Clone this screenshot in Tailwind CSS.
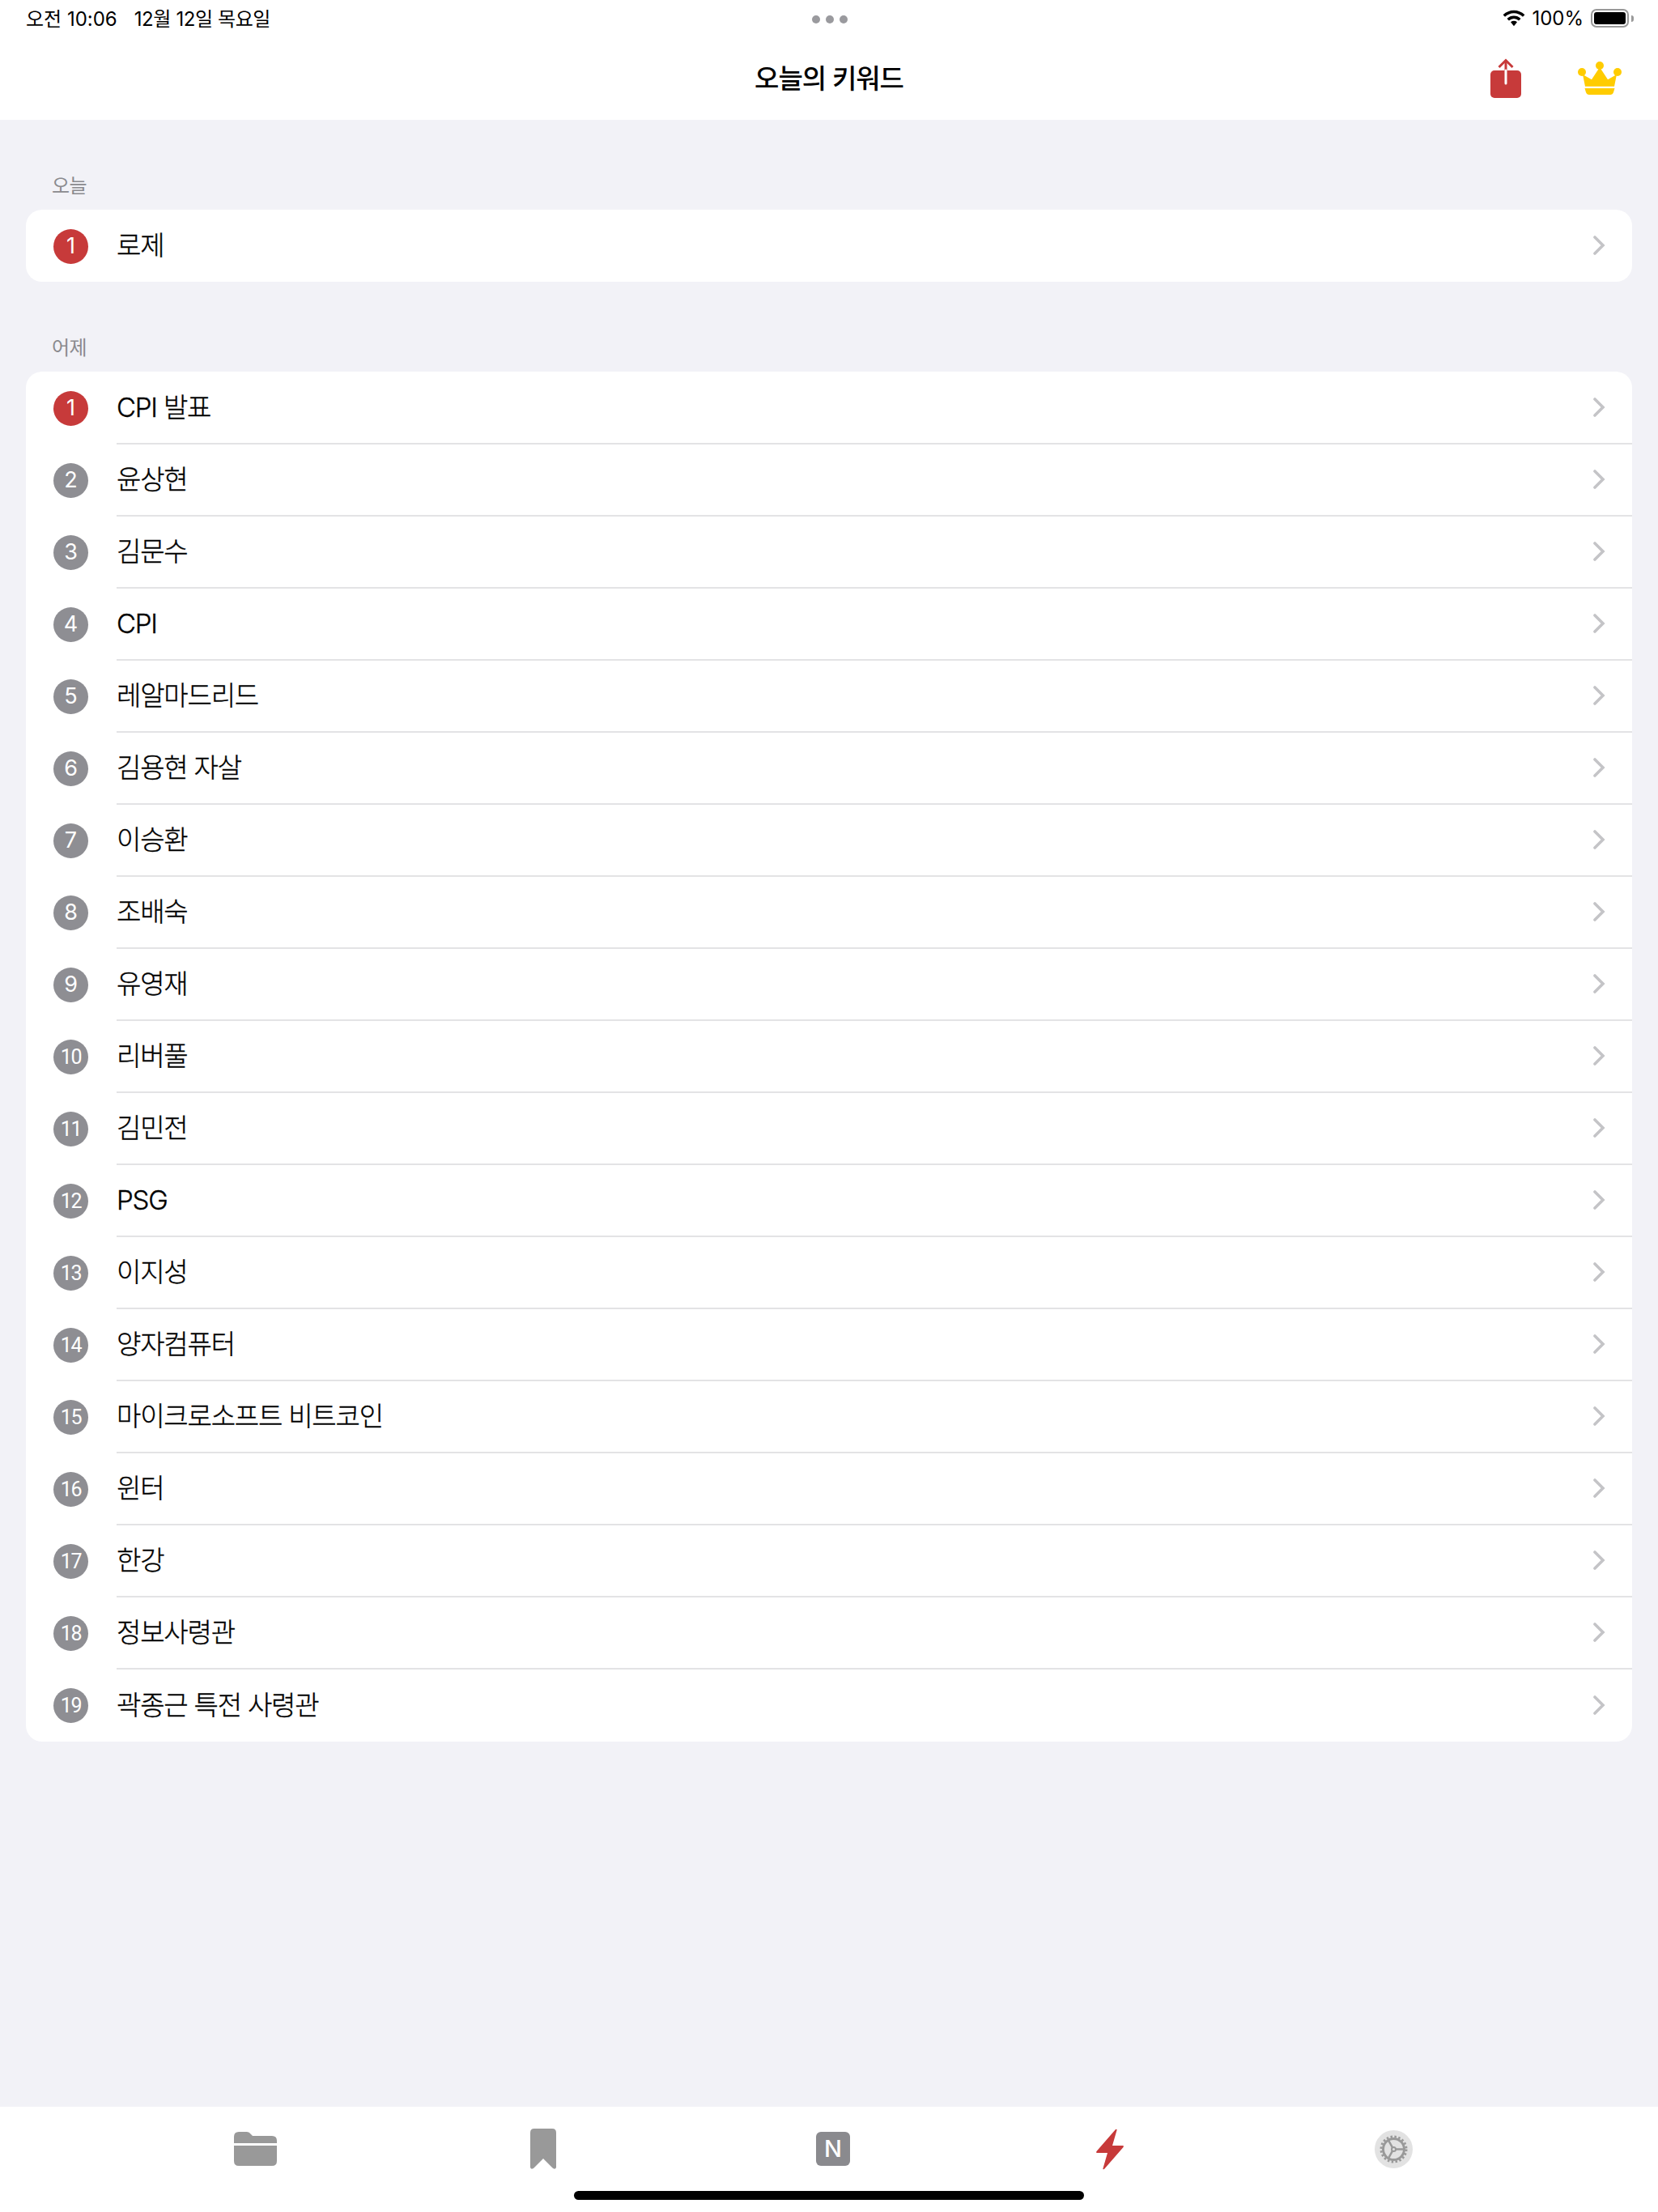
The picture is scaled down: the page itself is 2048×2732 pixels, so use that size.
<!doctype html>
<html lang="ko"><head><meta charset="utf-8"><script src="https://cdn.jsdelivr.net/npm/@tailwindcss/browser@4"></script></head>
<body class="m-0">
<div class="w-[2048px] h-[2732px] flex flex-col bg-[#f2f2f7] overflow-hidden font-['Inter','Noto_Sans_CJK_KR',sans-serif] text-black">
  <header class="bg-white h-[148px] shrink-0 relative flex flex-col">
    <div class="h-[47px] flex items-center pl-[32px] pr-[30px] text-[24px] relative">
      <span class="tracking-[0px]">오전 10:06</span><span class="ml-[21px] tracking-[-0.4px]">12월 12일 목요일</span>
      <div class="absolute left-[1003px] top-[19px] flex gap-[7px]"><i class="w-[10px] h-[10px] rounded-full bg-[#9a9a9e]"></i><i class="w-[10px] h-[10px] rounded-full bg-[#9a9a9e]"></i><i class="w-[10px] h-[10px] rounded-full bg-[#9a9a9e]"></i></div>
      <div class="ml-auto flex items-center -translate-y-px">
        <svg width="28" height="21" viewBox="0 0 28 21" fill="none" stroke="#000" stroke-width="3.600"><path d="M1.800 7.500C9 .8 19 .8 26.200 7.500"/><path d="M6.700 12.300C11 8.300 17 8.300 21.300 12.300"/><path d="M10 15.200C12.400 13.300 15.600 13.300 18 15.200L14 20.200Z" fill="#000" stroke="none"/></svg>
        <span class="ml-[8px]">100%</span>
        <div class="ml-[9px] w-[47px] h-[23px] rounded-[7px] border-[2px] border-[#999] p-[2px]"><div class="w-full h-full rounded-[3px] bg-black"></div></div>
        <div class="w-[3px] h-[8px] rounded-r-[3px] bg-[#999] ml-[3px]"></div>
      </div>
    </div>
    <div class="h-[101px] flex items-center justify-center"><h1 class="text-[33px] font-medium leading-none tracking-[-1px] m-0">오늘의 키워드</h1></div>
    <svg class="absolute left-[1841px] top-[72px]" width="38" height="50" viewBox="0 0 38 50"><rect y="15" width="38" height="34" rx="5" fill="#c73a3a"/><path d="M19 3V16" stroke="#c73a3a" stroke-width="3"/><path d="M10.500 11 19 2.500 27.500 11" fill="none" stroke="#c73a3a" stroke-width="3"/><path d="M19 15V31" stroke="#fff" stroke-width="3" stroke-linecap="round"/></svg>
    <svg class="absolute left-[1949px] top-[76px]" width="54" height="41" viewBox="0 0 54 41" fill="#ffcc00"><circle cx="5" cy="13" r="5"/><circle cx="27" cy="5" r="5"/><circle cx="49" cy="13" r="5"/><path d="M6 16 17 22.300 27 7 37 22.300 48 16 45 30.700H9z"/><path d="M8.500 33H45.500l-1.500 5q-1 3-4 3H14q-3 0-4-3z"/></svg>
  </header>

  <main class="flex-1 px-[32px]">
    <h2 class="m-0 h-[111px] pl-[32px] pt-[64px] text-[24px] leading-[36px] font-normal text-[#8a8a8e] tracking-[-0.5px]">오늘</h2>
    <section class="bg-white rounded-[20px] overflow-hidden pt-[1px]">
      <a class="flex items-center h-[88px] pl-[34px]"><span class="w-[43px] h-[43px] rounded-full bg-[#c73a3a] text-white flex items-center justify-center text-[27px] shrink-0">1</span><div class="ml-[35px] flex-1 h-full flex items-center justify-between pr-[33px]"><span class="text-[33px] font-light tracking-[-1.2px] [-webkit-text-stroke:0.35px_#000]">로제</span><svg class="-translate-y-px" width="16" height="24" viewBox="0 0 16 24"><path d="M3 2l10 10L3 22" fill="none" stroke="#c4c4c7" stroke-width="3.600" stroke-linecap="round"/></svg></div></a>
    </section>
    <h2 class="m-0 h-[111px] pl-[32px] pt-[64px] text-[24px] leading-[36px] font-normal text-[#8a8a8e] tracking-[-0.5px]">어제</h2>
    <section class="bg-white rounded-[20px] overflow-hidden pt-[1px]">
      <a class="flex items-center h-[89px] pl-[34px]"><span class="w-[43px] h-[43px] rounded-full bg-[#c73a3a] text-white flex items-center justify-center text-[27px] shrink-0">1</span><div class="ml-[35px] flex-1 h-full flex items-center justify-between pr-[33px] border-b-[2px] border-[#e3e3e5]"><span class="text-[33px] font-light tracking-[-1.2px] [-webkit-text-stroke:0.35px_#000]">CPI 발표</span><svg class="-translate-y-px" width="16" height="24" viewBox="0 0 16 24"><path d="M3 2l10 10L3 22" fill="none" stroke="#c4c4c7" stroke-width="3.600" stroke-linecap="round"/></svg></div></a>
      <a class="flex items-center h-[89px] pl-[34px]"><span class="w-[43px] h-[43px] rounded-full bg-[#8e8e93] text-white flex items-center justify-center text-[27px] shrink-0">2</span><div class="ml-[35px] flex-1 h-full flex items-center justify-between pr-[33px] border-b-[2px] border-[#e3e3e5]"><span class="text-[33px] font-light tracking-[-1.2px] [-webkit-text-stroke:0.35px_#000]">윤상현</span><svg class="-translate-y-px" width="16" height="24" viewBox="0 0 16 24"><path d="M3 2l10 10L3 22" fill="none" stroke="#c4c4c7" stroke-width="3.600" stroke-linecap="round"/></svg></div></a>
      <a class="flex items-center h-[89px] pl-[34px]"><span class="w-[43px] h-[43px] rounded-full bg-[#8e8e93] text-white flex items-center justify-center text-[27px] shrink-0">3</span><div class="ml-[35px] flex-1 h-full flex items-center justify-between pr-[33px] border-b-[2px] border-[#e3e3e5]"><span class="text-[33px] font-light tracking-[-1.2px] [-webkit-text-stroke:0.35px_#000]">김문수</span><svg class="-translate-y-px" width="16" height="24" viewBox="0 0 16 24"><path d="M3 2l10 10L3 22" fill="none" stroke="#c4c4c7" stroke-width="3.600" stroke-linecap="round"/></svg></div></a>
      <a class="flex items-center h-[89px] pl-[34px]"><span class="w-[43px] h-[43px] rounded-full bg-[#8e8e93] text-white flex items-center justify-center text-[27px] shrink-0">4</span><div class="ml-[35px] flex-1 h-full flex items-center justify-between pr-[33px] border-b-[2px] border-[#e3e3e5]"><span class="text-[33px] font-light tracking-[-1.2px] [-webkit-text-stroke:0.35px_#000]">CPI</span><svg class="-translate-y-px" width="16" height="24" viewBox="0 0 16 24"><path d="M3 2l10 10L3 22" fill="none" stroke="#c4c4c7" stroke-width="3.600" stroke-linecap="round"/></svg></div></a>
      <a class="flex items-center h-[89px] pl-[34px]"><span class="w-[43px] h-[43px] rounded-full bg-[#8e8e93] text-white flex items-center justify-center text-[27px] shrink-0">5</span><div class="ml-[35px] flex-1 h-full flex items-center justify-between pr-[33px] border-b-[2px] border-[#e3e3e5]"><span class="text-[33px] font-light tracking-[-1.2px] [-webkit-text-stroke:0.35px_#000]">레알마드리드</span><svg class="-translate-y-px" width="16" height="24" viewBox="0 0 16 24"><path d="M3 2l10 10L3 22" fill="none" stroke="#c4c4c7" stroke-width="3.600" stroke-linecap="round"/></svg></div></a>
      <a class="flex items-center h-[89px] pl-[34px]"><span class="w-[43px] h-[43px] rounded-full bg-[#8e8e93] text-white flex items-center justify-center text-[27px] shrink-0">6</span><div class="ml-[35px] flex-1 h-full flex items-center justify-between pr-[33px] border-b-[2px] border-[#e3e3e5]"><span class="text-[33px] font-light tracking-[-1.2px] [-webkit-text-stroke:0.35px_#000]">김용현 자살</span><svg class="-translate-y-px" width="16" height="24" viewBox="0 0 16 24"><path d="M3 2l10 10L3 22" fill="none" stroke="#c4c4c7" stroke-width="3.600" stroke-linecap="round"/></svg></div></a>
      <a class="flex items-center h-[89px] pl-[34px]"><span class="w-[43px] h-[43px] rounded-full bg-[#8e8e93] text-white flex items-center justify-center text-[27px] shrink-0">7</span><div class="ml-[35px] flex-1 h-full flex items-center justify-between pr-[33px] border-b-[2px] border-[#e3e3e5]"><span class="text-[33px] font-light tracking-[-1.2px] [-webkit-text-stroke:0.35px_#000]">이승환</span><svg class="-translate-y-px" width="16" height="24" viewBox="0 0 16 24"><path d="M3 2l10 10L3 22" fill="none" stroke="#c4c4c7" stroke-width="3.600" stroke-linecap="round"/></svg></div></a>
      <a class="flex items-center h-[89px] pl-[34px]"><span class="w-[43px] h-[43px] rounded-full bg-[#8e8e93] text-white flex items-center justify-center text-[27px] shrink-0">8</span><div class="ml-[35px] flex-1 h-full flex items-center justify-between pr-[33px] border-b-[2px] border-[#e3e3e5]"><span class="text-[33px] font-light tracking-[-1.2px] [-webkit-text-stroke:0.35px_#000]">조배숙</span><svg class="-translate-y-px" width="16" height="24" viewBox="0 0 16 24"><path d="M3 2l10 10L3 22" fill="none" stroke="#c4c4c7" stroke-width="3.600" stroke-linecap="round"/></svg></div></a>
      <a class="flex items-center h-[89px] pl-[34px]"><span class="w-[43px] h-[43px] rounded-full bg-[#8e8e93] text-white flex items-center justify-center text-[27px] shrink-0">9</span><div class="ml-[35px] flex-1 h-full flex items-center justify-between pr-[33px] border-b-[2px] border-[#e3e3e5]"><span class="text-[33px] font-light tracking-[-1.2px] [-webkit-text-stroke:0.35px_#000]">유영재</span><svg class="-translate-y-px" width="16" height="24" viewBox="0 0 16 24"><path d="M3 2l10 10L3 22" fill="none" stroke="#c4c4c7" stroke-width="3.600" stroke-linecap="round"/></svg></div></a>
      <a class="flex items-center h-[89px] pl-[34px]"><span class="w-[43px] h-[43px] rounded-full bg-[#8e8e93] text-white flex items-center justify-center font-['Roboto',sans-serif] text-[25px] tracking-[-1.2px] shrink-0">10</span><div class="ml-[35px] flex-1 h-full flex items-center justify-between pr-[33px] border-b-[2px] border-[#e3e3e5]"><span class="text-[33px] font-light tracking-[-1.2px] [-webkit-text-stroke:0.35px_#000]">리버풀</span><svg class="-translate-y-px" width="16" height="24" viewBox="0 0 16 24"><path d="M3 2l10 10L3 22" fill="none" stroke="#c4c4c7" stroke-width="3.600" stroke-linecap="round"/></svg></div></a>
      <a class="flex items-center h-[89px] pl-[34px]"><span class="w-[43px] h-[43px] rounded-full bg-[#8e8e93] text-white flex items-center justify-center font-['Roboto',sans-serif] text-[25px] tracking-[-1.2px] shrink-0">11</span><div class="ml-[35px] flex-1 h-full flex items-center justify-between pr-[33px] border-b-[2px] border-[#e3e3e5]"><span class="text-[33px] font-light tracking-[-1.2px] [-webkit-text-stroke:0.35px_#000]">김민전</span><svg class="-translate-y-px" width="16" height="24" viewBox="0 0 16 24"><path d="M3 2l10 10L3 22" fill="none" stroke="#c4c4c7" stroke-width="3.600" stroke-linecap="round"/></svg></div></a>
      <a class="flex items-center h-[89px] pl-[34px]"><span class="w-[43px] h-[43px] rounded-full bg-[#8e8e93] text-white flex items-center justify-center font-['Roboto',sans-serif] text-[25px] tracking-[-1.2px] shrink-0">12</span><div class="ml-[35px] flex-1 h-full flex items-center justify-between pr-[33px] border-b-[2px] border-[#e3e3e5]"><span class="text-[33px] font-light tracking-[-1.2px] [-webkit-text-stroke:0.35px_#000]">PSG</span><svg class="-translate-y-px" width="16" height="24" viewBox="0 0 16 24"><path d="M3 2l10 10L3 22" fill="none" stroke="#c4c4c7" stroke-width="3.600" stroke-linecap="round"/></svg></div></a>
      <a class="flex items-center h-[89px] pl-[34px]"><span class="w-[43px] h-[43px] rounded-full bg-[#8e8e93] text-white flex items-center justify-center font-['Roboto',sans-serif] text-[25px] tracking-[-1.2px] shrink-0">13</span><div class="ml-[35px] flex-1 h-full flex items-center justify-between pr-[33px] border-b-[2px] border-[#e3e3e5]"><span class="text-[33px] font-light tracking-[-1.2px] [-webkit-text-stroke:0.35px_#000]">이지성</span><svg class="-translate-y-px" width="16" height="24" viewBox="0 0 16 24"><path d="M3 2l10 10L3 22" fill="none" stroke="#c4c4c7" stroke-width="3.600" stroke-linecap="round"/></svg></div></a>
      <a class="flex items-center h-[89px] pl-[34px]"><span class="w-[43px] h-[43px] rounded-full bg-[#8e8e93] text-white flex items-center justify-center font-['Roboto',sans-serif] text-[25px] tracking-[-1.2px] shrink-0">14</span><div class="ml-[35px] flex-1 h-full flex items-center justify-between pr-[33px] border-b-[2px] border-[#e3e3e5]"><span class="text-[33px] font-light tracking-[-1.2px] [-webkit-text-stroke:0.35px_#000]">양자컴퓨터</span><svg class="-translate-y-px" width="16" height="24" viewBox="0 0 16 24"><path d="M3 2l10 10L3 22" fill="none" stroke="#c4c4c7" stroke-width="3.600" stroke-linecap="round"/></svg></div></a>
      <a class="flex items-center h-[89px] pl-[34px]"><span class="w-[43px] h-[43px] rounded-full bg-[#8e8e93] text-white flex items-center justify-center font-['Roboto',sans-serif] text-[25px] tracking-[-1.2px] shrink-0">15</span><div class="ml-[35px] flex-1 h-full flex items-center justify-between pr-[33px] border-b-[2px] border-[#e3e3e5]"><span class="text-[33px] font-light tracking-[-1.2px] [-webkit-text-stroke:0.35px_#000]">마이크로소프트 비트코인</span><svg class="-translate-y-px" width="16" height="24" viewBox="0 0 16 24"><path d="M3 2l10 10L3 22" fill="none" stroke="#c4c4c7" stroke-width="3.600" stroke-linecap="round"/></svg></div></a>
      <a class="flex items-center h-[89px] pl-[34px]"><span class="w-[43px] h-[43px] rounded-full bg-[#8e8e93] text-white flex items-center justify-center font-['Roboto',sans-serif] text-[25px] tracking-[-1.2px] shrink-0">16</span><div class="ml-[35px] flex-1 h-full flex items-center justify-between pr-[33px] border-b-[2px] border-[#e3e3e5]"><span class="text-[33px] font-light tracking-[-1.2px] [-webkit-text-stroke:0.35px_#000]">윈터</span><svg class="-translate-y-px" width="16" height="24" viewBox="0 0 16 24"><path d="M3 2l10 10L3 22" fill="none" stroke="#c4c4c7" stroke-width="3.600" stroke-linecap="round"/></svg></div></a>
      <a class="flex items-center h-[89px] pl-[34px]"><span class="w-[43px] h-[43px] rounded-full bg-[#8e8e93] text-white flex items-center justify-center font-['Roboto',sans-serif] text-[25px] tracking-[-1.2px] shrink-0">17</span><div class="ml-[35px] flex-1 h-full flex items-center justify-between pr-[33px] border-b-[2px] border-[#e3e3e5]"><span class="text-[33px] font-light tracking-[-1.2px] [-webkit-text-stroke:0.35px_#000]">한강</span><svg class="-translate-y-px" width="16" height="24" viewBox="0 0 16 24"><path d="M3 2l10 10L3 22" fill="none" stroke="#c4c4c7" stroke-width="3.600" stroke-linecap="round"/></svg></div></a>
      <a class="flex items-center h-[89px] pl-[34px]"><span class="w-[43px] h-[43px] rounded-full bg-[#8e8e93] text-white flex items-center justify-center font-['Roboto',sans-serif] text-[25px] tracking-[-1.2px] shrink-0">18</span><div class="ml-[35px] flex-1 h-full flex items-center justify-between pr-[33px] border-b-[2px] border-[#e3e3e5]"><span class="text-[33px] font-light tracking-[-1.2px] [-webkit-text-stroke:0.35px_#000]">정보사령관</span><svg class="-translate-y-px" width="16" height="24" viewBox="0 0 16 24"><path d="M3 2l10 10L3 22" fill="none" stroke="#c4c4c7" stroke-width="3.600" stroke-linecap="round"/></svg></div></a>
      <a class="flex items-center h-[89px] pl-[34px]"><span class="w-[43px] h-[43px] rounded-full bg-[#8e8e93] text-white flex items-center justify-center font-['Roboto',sans-serif] text-[25px] tracking-[-1.2px] shrink-0">19</span><div class="ml-[35px] flex-1 h-full flex items-center justify-between pr-[33px]"><span class="text-[33px] font-light tracking-[-1.2px] [-webkit-text-stroke:0.35px_#000]">곽종근 특전 사령관</span><svg class="-translate-y-px" width="16" height="24" viewBox="0 0 16 24"><path d="M3 2l10 10L3 22" fill="none" stroke="#c4c4c7" stroke-width="3.600" stroke-linecap="round"/></svg></div></a>
    </section>
  </main>

  <footer class="bg-white h-[130px] shrink-0 flex flex-col">
    <nav class="h-[104px] flex items-center pl-[289px]">
      <svg class="shrink-0" width="53" height="42" viewBox="0 0 53 42" fill="#999"><path d="M0 17H53V36q0 6-6 6H6q-6 0-6-6zM0 14V6q0-6 6-6h10q3 0 5 3l2 2h24q6 0 6 6v3z"/></svg>
      <svg class="ml-[313px] shrink-0" width="32" height="50" viewBox="0 0 32 50"><path d="M0 5q0-5 5-5h22q5 0 5 5v43q-1 3-4 1L16 37 4 49q-3 2-4-1z" fill="#999"/></svg>
      <div class="ml-[321px] w-[42px] h-[42px] rounded-[6px] bg-[#8a8a8e] text-white flex items-center justify-center text-[29px] font-medium shrink-0">N</div>
      <svg class="ml-[304px] shrink-0" width="34" height="51" viewBox="0 0 34 51"><path d="M24 1q2-1 1.500 1L20 21h13q1.500 0 .5 2L10 50q-2 1-1.500-1L14 30H1q-1.500 0-.5-2z" fill="#c73a3a"/></svg>
      <svg class="ml-[310px] shrink-0" width="47" height="47" viewBox="0 0 47 47"><circle cx="23.500" cy="23.500" r="23.500" fill="#e2e2e2"/><circle cx="23.500" cy="23.500" r="13" fill="none" stroke="#999" stroke-width="3"/><circle cx="23.500" cy="23.500" r="15.500" fill="none" stroke="#999" stroke-width="3" stroke-dasharray="2.500 2.400"/><circle cx="23.500" cy="23.500" r="2.500" fill="none" stroke="#999" stroke-width="2"/><path d="M26 23.500H37M22 21.300 16.500 11.500M22 25.700 16.500 35.500" stroke="#999" stroke-width="2.500"/></svg>
    </nav>
    <div class="w-[630px] h-[11px] rounded-full bg-black mx-auto"></div>
  </footer>
</div>
</body></html>
